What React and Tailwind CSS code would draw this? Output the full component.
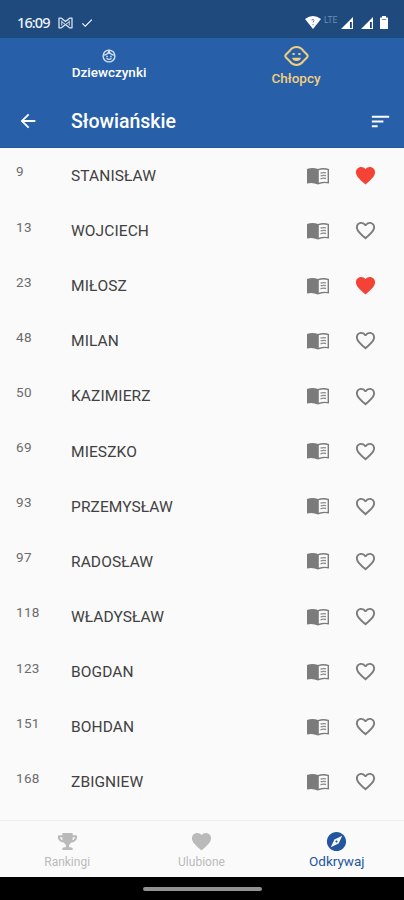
import { MdArrowBack, MdSort, MdFavorite, MdFavoriteBorder, MdExplore, MdCheck } from "react-icons/md";
import { FaTrophy } from "react-icons/fa";

const names = [
  { rank: 9, name: "STANISŁAW", liked: true },
  { rank: 13, name: "WOJCIECH" },
  { rank: 23, name: "MIŁOSZ", liked: true },
  { rank: 48, name: "MILAN" },
  { rank: 50, name: "KAZIMIERZ" },
  { rank: 69, name: "MIESZKO" },
  { rank: 93, name: "PRZEMYSŁAW" },
  { rank: 97, name: "RADOSŁAW" },
  { rank: 118, name: "WŁADYSŁAW" },
  { rank: 123, name: "BOGDAN" },
  { rank: 151, name: "BOHDAN" },
  { rank: 168, name: "ZBIGNIEW" },
];

function BookIcon() {
  return (
    <svg viewBox="0 0 22 18" className="w-[22px] h-[18px]">
      <path d="M0 2Q5.500 0 11 2Q16.500 0 22 2V16.500Q16.500 15 11 17.500Q5.500 15 0 16.500Z" fill="#7b7b7b" />
      <path d="M11.800 3.300Q16 1.800 20.600 3.100V15Q16 14.200 11.800 15.800Z" fill="#fafafa" />
      <path d="M13.500 6.200Q16 5.200 19 5.900M13.500 9Q16 8 19 8.700M13.500 11.800Q16 10.800 19 11.500" fill="none" stroke="#8c8c8c" strokeWidth="1.300" />
    </svg>
  );
}

function GirlIcon() {
  return (
    <svg viewBox="0 0 14 14" className="w-[14px] h-[14px]" fill="none" stroke="#d3e1f3">
      <circle cx="7" cy="7" r="5.900" strokeWidth="1.400" />
      <path d="M2 6.200Q6 5.500 7 2Q8 5.500 12 6.200" strokeWidth="1.200" />
      <path d="M7 2V5" strokeWidth="1.800" />
      <path d="M4.500 9.300Q7 11.500 9.500 9.300" strokeWidth="1.300" />
      <path d="M4.300 7.500h1.500M8.200 7.500h1.500" strokeWidth="1.500" />
    </svg>
  );
}

function BoyIcon() {
  return (
    <svg viewBox="0 0 25 20" className="w-[25px] h-[20px]" fill="none" stroke="#f2cf7e" strokeLinejoin="round">
      <path d="M12.500 1.100Q16.500 1.100 19.200 4.700L23 8.500Q24.300 10 23 11.500L19.200 15.300Q16.500 18.900 12.500 18.900Q8.500 18.900 5.800 15.300L2 11.500Q0.700 10 2 8.500L5.800 4.700Q8.500 1.100 12.500 1.100Z" strokeWidth="2" />
      <path d="M8.500 8h2.200M14.300 8h2.200" strokeWidth="2.200" />
      <path d="M8 11.800h9Q16 15 12.500 15Q9 15 8 11.800Z" fill="#f2cf7e" stroke="none" />
    </svg>
  );
}

function Signal() {
  return (
    <svg viewBox="0 0 12 12" className="w-[12px] h-[12px]">
      <path d="M12 0V12H0Z" fill="#fff" />
      <path d="M9 5h1.800v6H9Z" fill="#1d3f78" />
    </svg>
  );
}

function StatusBar() {
  return (
    <div className="h-[38px] shrink-0 bg-[#1e4a7e] flex items-center pl-[17px] pr-[16px] pt-[7px] text-white">
      <span className="font-['Noto_Sans'] font-medium text-[14.5px] tracking-[-0.9px] w-[41px] text-[#eef3f9]">16:09</span>
      <svg viewBox="0 0 15 12" className="w-[15px] h-[12px]" fill="none" stroke="#dbe5f1" strokeLinejoin="round">
        <path d="M1 1.200H3.500L7.500 4.500L11.500 1.200H14V10.800H11.500L7.500 7.500L3.500 10.800H1Z" strokeWidth="1.300" />
        <path d="M3.800 3.500V8.500M11.200 3.500V8.500M4 5L7.500 7.500L11 5" strokeWidth="1" />
      </svg>
      <MdCheck className="w-[14px] h-[14px] ml-[7px]" />
      <div className="ml-auto flex items-center">
        <svg viewBox="0 0 16 13" className="w-[16px] h-[13px]">
          <path d="M0 3Q8 -3 16 3L8 13Z" fill="#fff" />
          <path d="M6.500 4Q9 2.500 9 4.500L8 6.500M8 8v1.200" stroke="#667d9a" fill="none" />
        </svg>
        <span className="font-[Roboto] text-[8.500px] leading-[8px] text-[#6d8db2] ml-[3px] mb-[6px] w-[15px]">LTE</span>
        <div className="ml-[2px] flex gap-[8px]">
          <Signal />
          <Signal />
        </div>
        <svg viewBox="0 0 8 13" className="w-[8px] h-[13px] ml-[7px]">
          <path d="M2 0h4v1.500h2V13H0V1.500h2Z" fill="#fff" />
          <path d="M2 3.500h4" stroke="#7d8ba0" />
        </svg>
      </div>
    </div>
  );
}

export default function App() {
  return (
    <div className="w-[404px] h-[900px] flex flex-col overflow-hidden bg-[#fafafa] font-[Roboto,sans-serif]">
      <StatusBar />
      <header className="h-[110px] shrink-0 bg-[#2760a9] text-white border-b border-[#20579d]">
        <div className="h-[56px] flex text-center">
          <button className="w-[218px] flex flex-col items-center pt-[11px]">
            <GirlIcon />
            <span className="text-[13.500px] leading-[15px] mt-[2px] font-medium">Dziewczynki</span>
          </button>
          <button className="w-[156px] flex flex-col items-center pt-[8px] text-[#f2cf7e]">
            <BoyIcon />
            <span className="text-[13.500px] leading-[16px] mt-[4px] font-medium">Chłopcy</span>
          </button>
        </div>
        <div className="h-[54px] flex items-center pl-[17px] pr-[12px]">
          <MdArrowBack className="w-[22px] h-[22px]" />
          <h1 className="ml-[32px] pt-[2px] text-[19.500px] font-medium">Słowiańskie</h1>
          <MdSort className="w-[23px] h-[23px] ml-auto" />
        </div>
      </header>

      <ul className="flex-1 min-h-0">
        {names.map((item) => (
          <li key={item.rank} className="h-[55.130px] flex items-center pl-[16px] pr-[27px]">
            <span className="w-[55px] text-[13.500px] tracking-[0.3px] text-[#6b6b6b] mb-[8px]">{item.rank}</span>
            <span className="text-[15.500px] tracking-[0.1px] text-[#414141] pt-[2px]">{item.name}</span>
            <div className="ml-auto flex items-center gap-[25px]">
              <BookIcon />
              {item.liked ? (
                <MdFavorite className="w-[23px] h-[23px] text-[#f44336]" />
              ) : (
                <MdFavoriteBorder className="w-[23px] h-[23px] text-[#7c7c7c]" />
              )}
            </div>
          </li>
        ))}
      </ul>

      <nav className="h-[57px] shrink-0 border-t border-[#eee] flex text-[#bababa] text-[12px]">
        <a className="flex-1 flex flex-col items-center pt-[11px]">
          <FaTrophy className="w-[19px] h-[19px]" />
          <span className="leading-[14px] mt-[4px]">Rankingi</span>
        </a>
        <a className="flex-1 flex flex-col items-center pt-[9px]">
          <MdFavorite className="w-[23px] h-[23px]" />
          <span className="leading-[14px] mt-[2px]">Ulubione</span>
        </a>
        <a className="flex-1 flex flex-col items-center pt-[9px] pl-[1px] text-[#2456a0]">
          <MdExplore className="w-[23px] h-[23px]" />
          <span className="text-[13.500px] leading-[15px] mt-[1px]">Odkrywaj</span>
        </a>
      </nav>
      <div className="h-[23px] shrink-0 bg-black flex justify-center items-center">
        <div className="w-[119px] h-[4px] rounded-full bg-[#929292]" />
      </div>
    </div>
  );
}
